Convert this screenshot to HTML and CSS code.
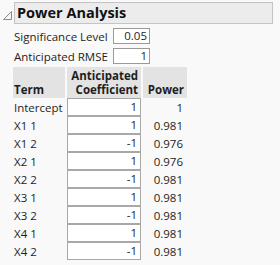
FILE: index.html
```html
<!DOCTYPE html>
<html lang="en">
<head>
    <meta charset="UTF-8">
    <title>Power Analysis</title>
    <link rel="stylesheet" href="styles.css">
</head>
<body>
    <div class="outline">
        <div class="outline-head">
            <svg class="toggle" width="11" height="11" viewBox="0 0 11 11">
                <path d="M9.5 1.5 L9.5 9.5 L1.5 9.5 Z" fill="none" stroke="#8a8a8a" stroke-width="1"/>
            </svg>
            <div class="title">Power Analysis</div>
        </div>
        <div class="content">
            <div class="param">
                <span class="param-label">Significance Level</span>
                <span class="num-box">0.05</span>
            </div>
            <div class="param">
                <span class="param-label">Anticipated RMSE</span>
                <span class="num-box">1</span>
            </div>
            <table class="power-table">
                <thead>
                    <tr>
                        <th class="col-term">Term</th>
                        <th class="col-coef">Anticipated<br>Coefficient</th>
                        <th class="col-power">Power</th>
                    </tr>
                </thead>
                <tbody>
                    <tr><td class="term">Intercept</td><td class="coef"><span class="cell-box">1</span></td><td class="power">1</td></tr>
                    <tr><td class="term">X1 1</td><td class="coef"><span class="cell-box">1</span></td><td class="power">0.981</td></tr>
                    <tr><td class="term">X1 2</td><td class="coef"><span class="cell-box">-1</span></td><td class="power">0.976</td></tr>
                    <tr><td class="term">X2 1</td><td class="coef"><span class="cell-box">1</span></td><td class="power">0.976</td></tr>
                    <tr><td class="term">X2 2</td><td class="coef"><span class="cell-box">-1</span></td><td class="power">0.981</td></tr>
                    <tr><td class="term">X3 1</td><td class="coef"><span class="cell-box">1</span></td><td class="power">0.981</td></tr>
                    <tr><td class="term">X3 2</td><td class="coef"><span class="cell-box">-1</span></td><td class="power">0.981</td></tr>
                    <tr><td class="term">X4 1</td><td class="coef"><span class="cell-box">1</span></td><td class="power">0.981</td></tr>
                    <tr><td class="term">X4 2</td><td class="coef"><span class="cell-box">-1</span></td><td class="power">0.981</td></tr>
                </tbody>
            </table>
        </div>
    </div>
</body>
</html>
```

FILE: styles.css
```css
body {
    margin: 0;
    padding: 0;
    background: #f9f9f9;
    color: #1e1e1e;
    font-family: "Open Sans", sans-serif;
    font-size: 11.5px;
}
.outline {
    padding-top: 2px;
}
.outline-head {
    display: flex;
    align-items: center;
}
.toggle {
    margin: 5px 1px 0 2px;
}
.title {
    flex: 1;
    height: 20px;
    margin-right: 7px;
    padding-left: 2px;
    border: 1px solid #c4c4c4;
    background: #ececec;
    font-size: 14.5px;
    font-weight: bold;
    line-height: 20px;
    color: #111;
}
.content {
    padding-left: 13px;
    padding-top: 3px;
}
.param {
    display: flex;
    align-items: center;
    height: 18px;
    margin-bottom: 2px;
}
.param-label {
    width: 99px;
    padding-left: 1px;
}
.num-box {
    width: 33px;
    height: 14px;
    line-height: 14px;
    padding-right: 2px;
    border: 1px solid #9a9a9a;
    background: #fff;
    text-align: right;
}
.power-table {
    border-collapse: separate;
    border-spacing: 2px 0;
    margin-left: -2px;
    margin-top: 2px;
}
.power-table th {
    background: #e3e3e3;
    font-weight: bold;
    vertical-align: bottom;
    padding: 2px 3px 1px 1px;
    line-height: 14px;
}
.col-term {
    width: 48px;
    text-align: left;
}
.col-coef {
    width: 70px;
    text-align: right;
}
.col-power {
    width: 40px;
    text-align: right;
}
.power-table td {
    padding: 0;
    height: 18px;
}
.term {
    padding-left: 1px !important;
}
.coef {
    vertical-align: top;
}
.cell-box {
    display: block;
    height: 16px;
    line-height: 16px;
    padding-right: 3px;
    border: 1px solid #a8a8a8;
    background: #fff;
    text-align: right;
}
.power {
    text-align: right;
    padding-right: 4px !important;
}
```
